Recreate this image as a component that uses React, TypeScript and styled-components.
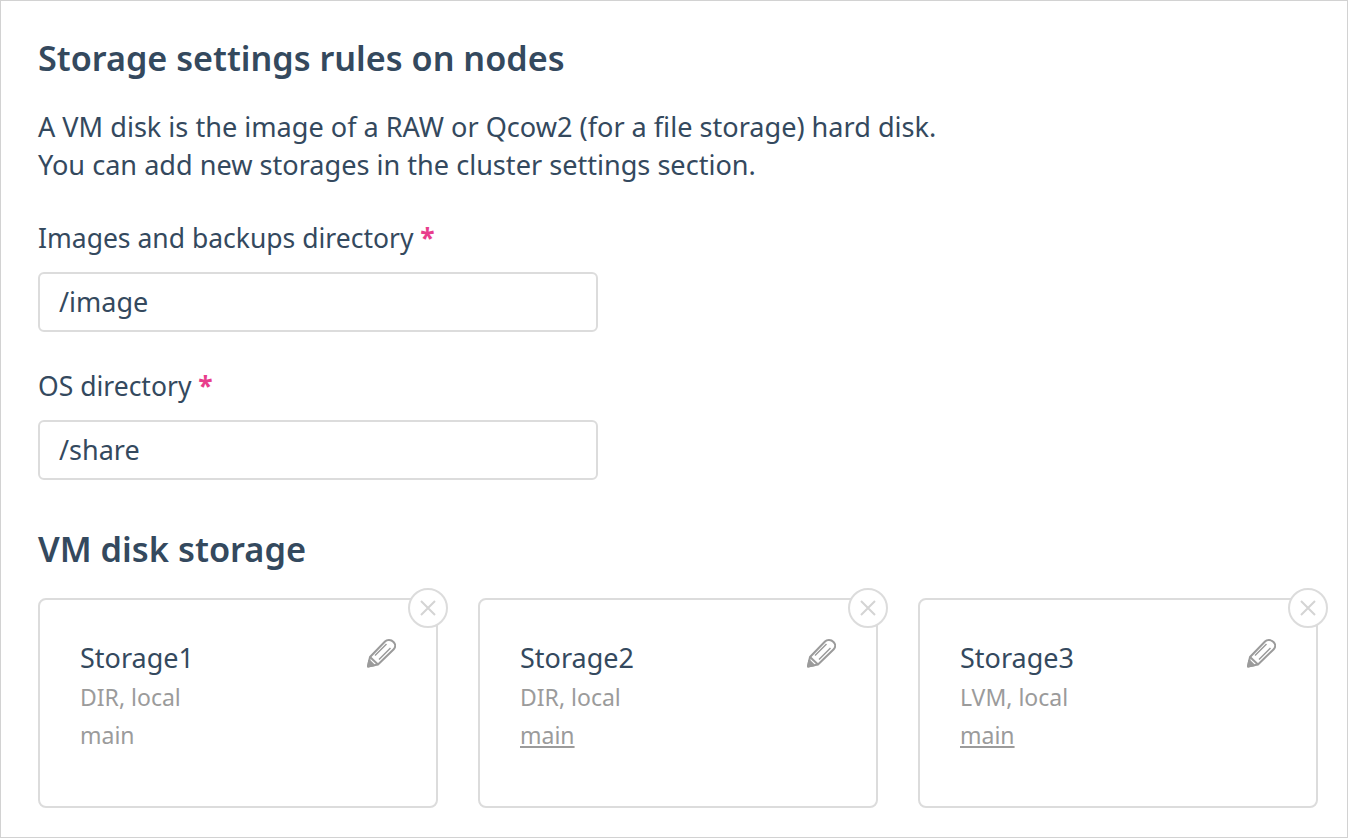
import React from 'react'
import styled, { createGlobalStyle } from 'styled-components'

const GlobalStyle = createGlobalStyle`
  html, body {
    margin: 0;
    padding: 0;
    background: #fff;
  }
  * {
    box-sizing: border-box;
  }
`

const Page = styled.div`
  width: 1348px;
  height: 838px;
  border: 1px solid #d2d2d2;
  padding: 37px 0 0 37px;
  overflow: hidden;
  font-family: 'Noto Sans', 'Open Sans', sans-serif;
  color: #34495e;
`

const Title = styled.h1`
  margin: 0;
  font-size: 34.2px;
  line-height: 40px;
  font-weight: 600;
`

const Intro = styled.p`
  margin: 30px 0 0;
  font-size: 27.1px;
  line-height: 37.5px;
`

const Field = styled.div`
  margin-top: 35px;
  & + & {
    margin-top: 34px;
  }
`

const Label = styled.label`
  display: block;
  font-size: 26.5px;
  line-height: 40px;
`

const Required = styled.span`
  color: #e83e8c;
  font-weight: 700;
`

const Input = styled.div`
  width: 560px;
  height: 60px;
  margin-top: 14px;
  padding: 0 19px;
  border: 2px solid #dcdcdc;
  border-radius: 6px;
  font-size: 27px;
  line-height: 56px;
`

const SectionTitle = styled.h2`
  margin: 44px 0 0;
  font-size: 34.4px;
  line-height: 50px;
  font-weight: 600;
`

const Cards = styled.div`
  display: flex;
  gap: 40px;
  margin-top: 24px;
`

const Card = styled.div`
  position: relative;
  width: 400px;
  height: 210px;
  padding: 40px 40px 0;
  border: 2px solid #dcdcdc;
  border-radius: 8px;
`

const CardName = styled.div`
  margin-bottom: 3px;
  font-size: 27px;
  line-height: 36px;
`

const CardMeta = styled.div<{ $link?: boolean }>`
  margin-top: 2px;
  font-size: 23px;
  line-height: 36px;
  color: #9b9b9b;
  text-decoration: ${p => (p.$link ? 'underline' : 'none')};
`

const RemoveButton = styled.div`
  position: absolute;
  top: -12px;
  right: -12px;
  display: flex;
  align-items: center;
  justify-content: center;
  width: 40px;
  height: 40px;
  background: #fff;
  border: 2px solid #dcdcdc;
  border-radius: 50%;
`

const EditIcon = styled.svg`
  position: absolute;
  top: 38px;
  right: 40px;
  width: 30px;
  height: 30px;
`

const Cross = () => (
  <svg width="18" height="18" viewBox="0 0 18 18" fill="none" stroke="#d4d4d4" strokeWidth="2">
    <path d="M2 2 L16 16 M16 2 L2 16" />
  </svg>
)

const Pencil = () => (
  <EditIcon viewBox="0 0 30 30" fill="none" stroke="#9b9b9b" strokeWidth="2" strokeLinejoin="round">
    <path d="M2 28.5 L4 19 L19 3.5 C21 1.5 25 1.5 27.5 4 C30 6.5 29.5 9.5 27.5 11.5 L12 26.5 Z" />
    <path d="M4 19 L12 26.5" />
    <path d="M9 17.5 L20.5 6 M13 21.5 L24.5 10" strokeWidth="1.5" />
    <path d="M2 28.5 L3.2 22.5 L8 27.2 Z" fill="#9b9b9b" />
  </EditIcon>
)

const storages = [
  { name: 'Storage1', type: 'DIR, local', link: false },
  { name: 'Storage2', type: 'DIR, local', link: true },
  { name: 'Storage3', type: 'LVM, local', link: true },
]

export default function App() {
  return (
    <Page>
      <GlobalStyle />
      <Title>Storage settings rules on nodes</Title>
      <Intro>
        A VM disk is the image of a RAW or Qcow2 (for a file storage) hard disk.
        <br />
        You can add new storages in the cluster settings section.
      </Intro>
      <Field>
        <Label>
          Images and backups directory <Required>*</Required>
        </Label>
        <Input>/image</Input>
      </Field>
      <Field>
        <Label>
          OS directory <Required>*</Required>
        </Label>
        <Input>/share</Input>
      </Field>
      <SectionTitle>VM disk storage</SectionTitle>
      <Cards>
        {storages.map(s => (
          <Card key={s.name}>
            <RemoveButton>
              <Cross />
            </RemoveButton>
            <Pencil />
            <CardName>{s.name}</CardName>
            <CardMeta>{s.type}</CardMeta>
            <CardMeta $link={s.link}>main</CardMeta>
          </Card>
        ))}
      </Cards>
    </Page>
  )
}
